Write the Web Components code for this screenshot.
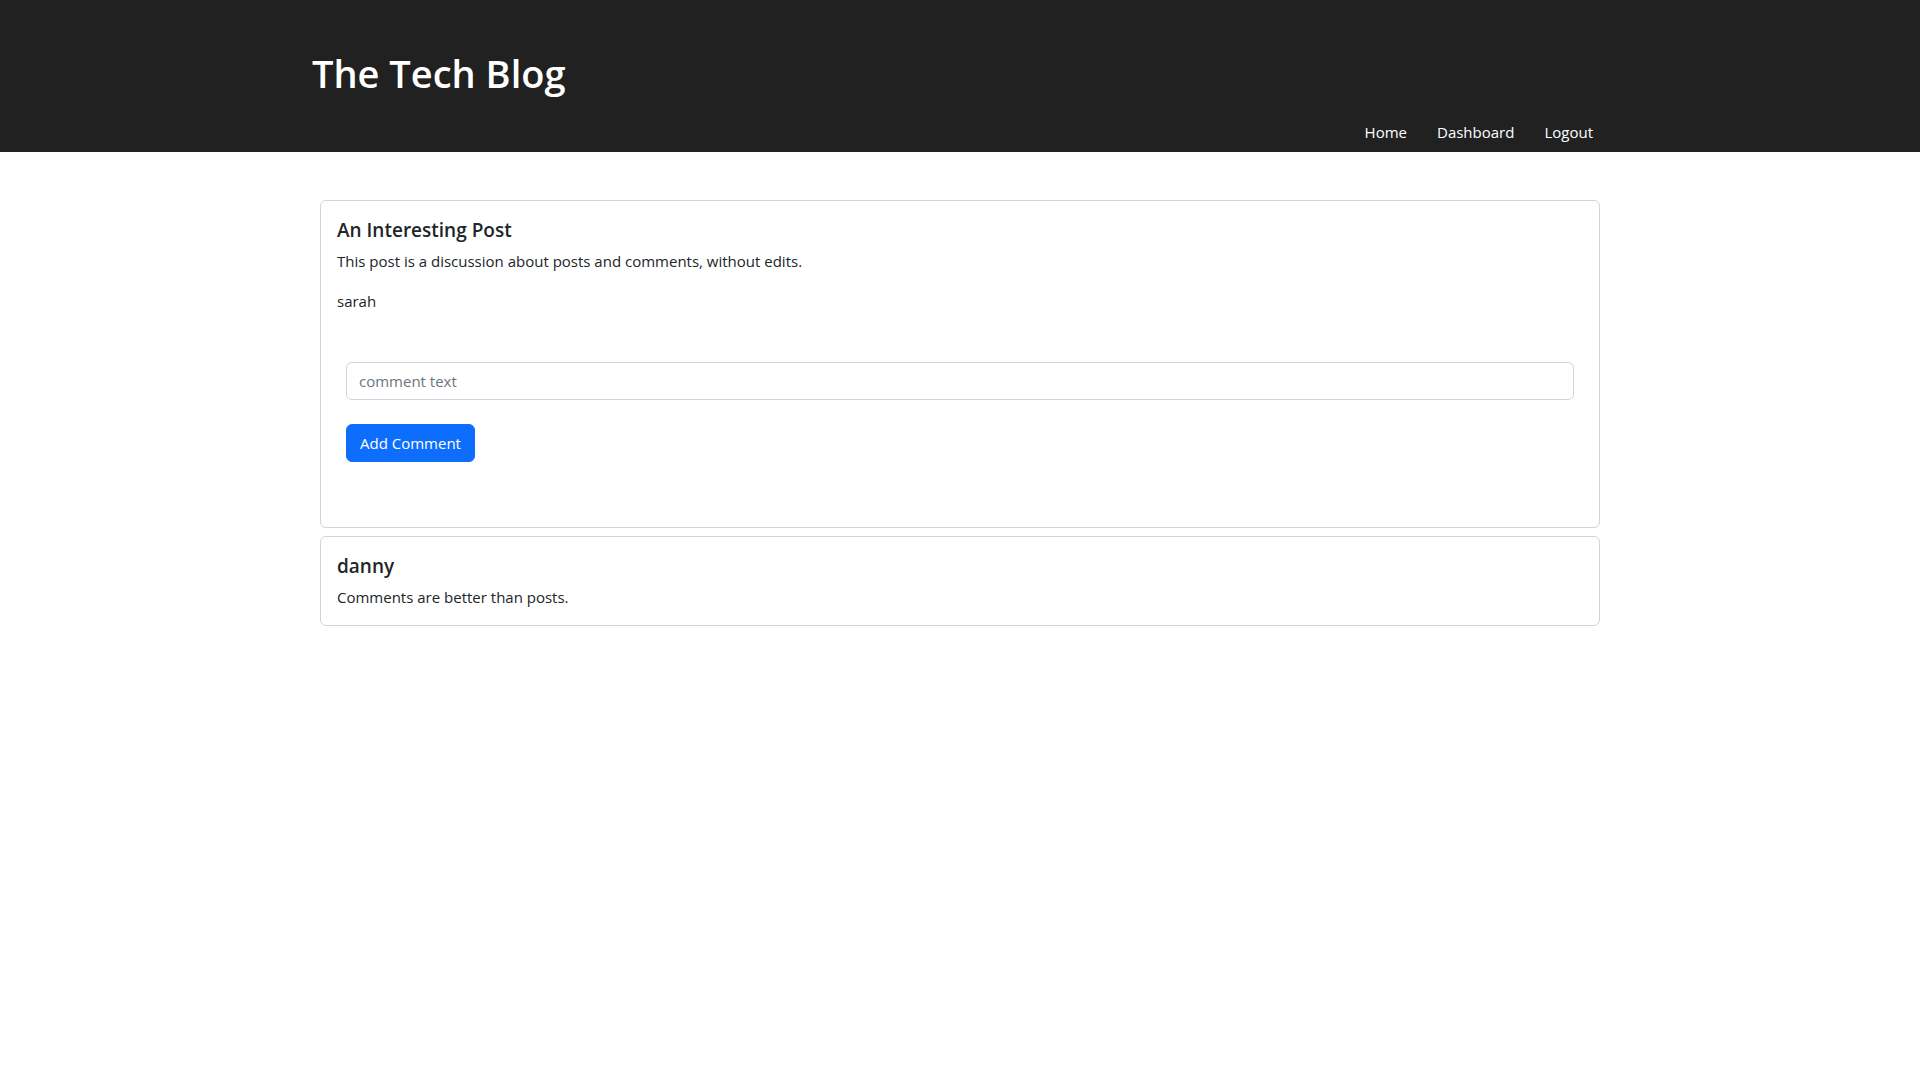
<!DOCTYPE html>
<html lang="en">
<head>
<meta charset="utf-8">
<title>The Tech Blog</title>
<style>
  body {
    margin: 0;
    background: #fff;
    color: #212529;
    font: 400 15px/24px "Segoe UI", "Open Sans", "Noto Sans", sans-serif;
  }
  main {
    display: grid;
    gap: 8px;
    max-width: 1280px;
    margin: 48px auto 0;
  }
</style>
</head>
<body>
<blog-header>
  The Tech Blog
  <nav-link slot="nav" href="#home">Home</nav-link>
  <nav-link slot="nav" href="#dashboard">Dashboard</nav-link>
  <nav-link slot="nav" href="#logout">Logout</nav-link>
</blog-header>
<main>
  <blog-card>
    <span slot="title">An Interesting Post</span>
    <post-text>This post is a discussion about posts and comments, without edits.</post-text>
    <post-text>sarah</post-text>
    <comment-form></comment-form>
  </blog-card>
  <blog-card>
    <span slot="title">danny</span>
    <post-text>Comments are better than posts.</post-text>
  </blog-card>
</main>
<script>
const define = (name, html, setup) => {
  const template = document.createElement('template');
  template.innerHTML = html;
  customElements.define(name, class extends HTMLElement {
    constructor() {
      super();
      this.attachShadow({ mode: 'open' }).append(template.content.cloneNode(true));
    }
    connectedCallback() {
      if (setup) setup(this);
    }
  });
};

define('blog-header', `
  <style>
    :host { display: block; background: #212121; color: #fff; }
    header { max-width: 1296px; margin: 0 auto; padding-top: 48px; }
    h1 { margin: 0 0 14px; font-size: 38px; line-height: 50px; font-weight: 600; }
    nav { display: flex; justify-content: flex-end; }
  </style>
  <header>
    <h1><slot></slot></h1>
    <nav aria-label="Main"><slot name="nav"></slot></nav>
  </header>`);

define('nav-link', `
  <style>
    :host { display: block; }
    a { display: block; padding: 8px 15px; color: inherit; text-decoration: none; }
  </style>
  <a><slot></slot></a>`,
  el => { el.shadowRoot.querySelector('a').href = el.getAttribute('href'); });

define('blog-card', `
  <style>
    :host { display: block; padding: 16px; border: 1px solid rgba(0, 0, 0, .175); border-radius: 6px; }
    h2 { margin: 0 0 6px; font-size: 19px; line-height: 26px; font-weight: 600; }
    .body { display: grid; gap: 16px; }
  </style>
  <h2><slot name="title"></slot></h2>
  <div class="body"><slot></slot></div>`);

define('post-text', `
  <style>
    :host { display: block; }
    p { margin: 0; }
  </style>
  <p><slot></slot></p>`);

define('comment-form', `
  <style>
    :host { display: block; padding: 33px 9px 49px; }
    form { display: grid; gap: 24px; justify-items: start; }
    input, button {
      box-sizing: border-box;
      height: 38px;
      margin: 0;
      padding: 6px 12px;
      border: 1px solid #ced4da;
      border-radius: 6px;
      font: inherit;
    }
    input { width: 100%; background: #fff; color: #212529; }
    input::placeholder { color: #6c757d; opacity: 1; }
    button { padding: 6px 13px; border-color: #0d6efd; background: #0d6efd; color: #fff; cursor: pointer; }
  </style>
  <form>
    <input type="text" name="comment" placeholder="comment text" aria-label="comment text">
    <button type="button">Add Comment</button>
  </form>`);
</script>
</body>
</html>
